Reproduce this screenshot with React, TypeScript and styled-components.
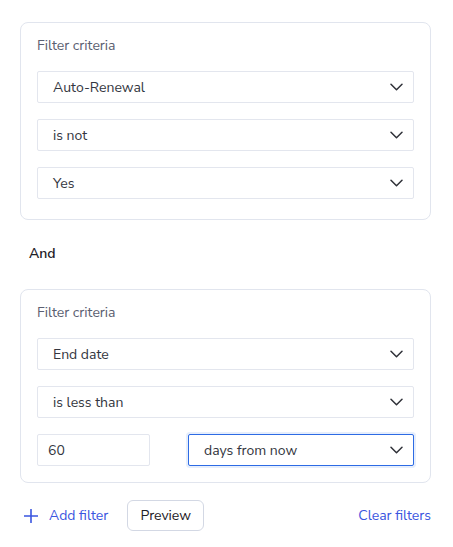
import React from "react";
import styled, { createGlobalStyle } from "styled-components";

const Global = createGlobalStyle`
  html, body { margin: 0; padding: 0; background: #ffffff; }
  body { font-family: "Nunito Sans", Lato, "Noto Sans", sans-serif; color: #2b2d33; }
  * { box-sizing: border-box; }
`;

const Page = styled.div`
  width: 453px;
  padding: 22px 22px 0 20px;
  display: flex;
  flex-direction: column;
`;

const Card = styled.div<{ $padBottom: number }>`
  border: 1px solid #e1e5ee;
  border-radius: 8px;
  padding: 13px 16px ${(p) => p.$padBottom}px 16px;
  display: flex;
  flex-direction: column;
  gap: 16px;
`;

const CardTitle = styled.div`
  font-size: 14px;
  line-height: 20px;
  color: #5b6071;
  margin-bottom: -1px;
`;

const Field = styled.div<{ $focused?: boolean; $width?: string }>`
  height: 32px;
  width: ${(p) => p.$width || "100%"};
  border: 1px solid ${(p) => (p.$focused ? "#2d6be4" : "#e3e6ee")};
  box-shadow: ${(p) => (p.$focused ? "0 0 0 2px #e6eefc" : "none")};
  border-radius: 2px;
  display: flex;
  align-items: center;
  justify-content: space-between;
  padding: 0 10px 0 15px;
  font-size: 14px;
  color: #333640;
  background: #fff;
`;

const NumField = styled(Field)`
  padding-left: 10px;
`;

const Row = styled.div`
  display: flex;
  justify-content: space-between;
  align-items: center;
`;

const AndLabel = styled.div`
  font-size: 14px;
  font-weight: 600;
  color: #1e2026;
  padding: 24px 0 25px 9px;
  line-height: 20px;
`;

const Footer = styled.div`
  display: flex;
  align-items: center;
  padding: 17px 0 0 4px;
`;

const LinkButton = styled.button`
  border: none;
  background: none;
  padding: 0;
  font-family: inherit;
  font-size: 14px;
  color: #3a55e0;
  display: flex;
  align-items: center;
  gap: 11px;
  cursor: pointer;
`;

const Button = styled.button`
  margin-left: 19px;
  height: 31px;
  width: 77px;
  border: 1px solid #d3d8e4;
  border-radius: 6px;
  background: #fff;
  font-family: inherit;
  font-size: 14px;
  color: #1e2026;
`;

const Spacer = styled.div`
  flex: 1;
`;

const Chevron = () => (
  <svg width="13" height="8" viewBox="0 0 13 8" fill="none">
    <path d="M1 1.2l5.5 5.5 5.5-5.5" stroke="#2f3138" strokeWidth="1.5" strokeLinecap="round" strokeLinejoin="round" />
  </svg>
);

const Plus = () => (
  <svg width="14" height="14" viewBox="0 0 14 14" fill="none">
    <path d="M7 0.5v13M0.5 7h13" stroke="#3a55e0" strokeWidth="1.6" strokeLinecap="round" />
  </svg>
);

const Select = ({ label, focused, width }: { label: string; focused?: boolean; width?: string }) => (
  <Field $focused={focused} $width={width}>
    <span>{label}</span>
    <Chevron />
  </Field>
);

export default function App() {
  return (
    <>
      <Global />
      <Page>
        <Card $padBottom={20}>
          <CardTitle>Filter criteria</CardTitle>
          <Select label="Auto-Renewal" />
          <Select label="is not" />
          <Select label="Yes" />
        </Card>
        <AndLabel>And</AndLabel>
        <Card $padBottom={16}>
          <CardTitle>Filter criteria</CardTitle>
          <Select label="End date" />
          <Select label="is less than" />
          <Row>
            <NumField $width="113px">
              <span>60</span>
            </NumField>
            <Select label="days from now" focused width="226px" />
          </Row>
        </Card>
        <Footer>
          <LinkButton>
            <Plus />
            Add filter
          </LinkButton>
          <Button>Preview</Button>
          <Spacer />
          <LinkButton>Clear filters</LinkButton>
        </Footer>
      </Page>
    </>
  );
}
